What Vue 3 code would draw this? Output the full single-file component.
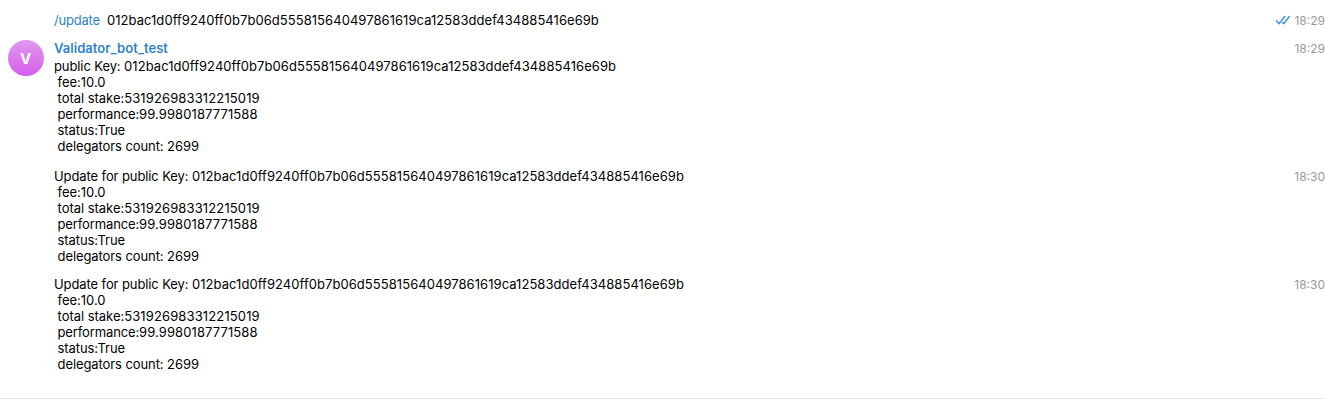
<script setup>
const details = [
  { label: ' fee:', value: '10.0', cls: 'fee' },
  { label: ' total stake:', value: '531926983312215019', cls: 'stake' },
  { label: ' performance:', value: '99.9980187771588', cls: 'perf' },
  { label: ' status:', value: 'True', cls: 'status' },
  { label: ' delegators count: ', value: '2699', cls: 'count' },
]
const key = '012bac1d0ff9240ff0b7b06d555815640497861619ca12583ddef434885416e69b'
</script>

<template>
  <main class="chat">
    <section class="msg first">
      <div class="body"><p class="line"><span class="link">/update</span><span class="cmd-key key">{{ key }}</span></p></div>
      <div class="meta">
        <svg class="ticks" width="16" height="10" viewBox="0 0 16 10"><path d="M1 5.4 L4.1 8.6 L10.2 1 M7.2 7.2 L8.6 8.6 L14.8 1" /></svg>
        <time>18:29</time>
      </div>
    </section>
    <section class="msg second">
      <div class="avatar">V</div>
      <div class="body">
        <p class="name">Validator_bot_test</p>
        <p class="line"><span class="prefix">public Key: </span><span class="key">{{ key }}</span></p>
        <p v-for="d in details" :key="d.cls" class="line" :class="d.cls"><span class="label">{{ d.label }}</span><span class="value">{{ d.value }}</span></p>
      </div>
      <div class="meta"><time>18:29</time></div>
    </section>
    <section v-for="n in 2" :key="n" class="msg update">
      <div class="body">
        <p class="line"><span class="prefix">Update for public Key: </span><span class="key">{{ key }}</span></p>
        <p v-for="d in details" :key="d.cls" class="line" :class="d.cls"><span class="label">{{ d.label }}</span><span class="value">{{ d.value }}</span></p>
      </div>
      <div class="meta"><time>18:30</time></div>
    </section>
  </main>
</template>

<style>
body { margin: 0; background: #fff; overflow: hidden; }
</style>
<style scoped>
.chat { box-sizing: border-box; width: 1325px; height: 399px; padding-top: 12px; border-bottom: 1px solid #e8e8e8; font: 13px/16px Inter, sans-serif; color: #000; background: #fff; overflow: hidden; }
.msg { display: flex; position: relative; }
.body { flex: 1; padding-left: 54px; }
p { margin: 0; white-space: pre; }
.line { height: 16px; line-height: 17px; }
.first { height: 28px; }
.second { height: 128px; }
.update { height: 108px; }
.link { color: #2f83c9; letter-spacing: -0.2px; }
.cmd-key { margin-left: 7px; }
.key { letter-spacing: 0.055px; }
.prefix { letter-spacing: -0.1px; }
.label { letter-spacing: -0.04px; }
.stake .value { letter-spacing: 0.13px; }
.perf .label { letter-spacing: -0.13px; }
.perf .value { letter-spacing: 0.1px; }
.status .label, .status .value { letter-spacing: -0.09px; }
.count .label { letter-spacing: -0.09px; }
.name { color: #2f83c9; font-weight: 600; height: 18px; line-height: 17px; letter-spacing: 0.04px; }
.avatar { position: absolute; left: 8px; top: 0; width: 36px; height: 36px; border-radius: 50%; background: linear-gradient(#e09aee, #d65ceb); color: #fff; font-weight: 700; font-size: 15px; line-height: 37px; text-align: center; text-indent: -1px; }
.meta { display: flex; align-items: flex-start; gap: 3px; color: #999; font-size: 12px; line-height: 18px; }
.ticks { margin-top: 3px; fill: none; stroke: #3c8fd8; stroke-width: 1.4; }
</style>
